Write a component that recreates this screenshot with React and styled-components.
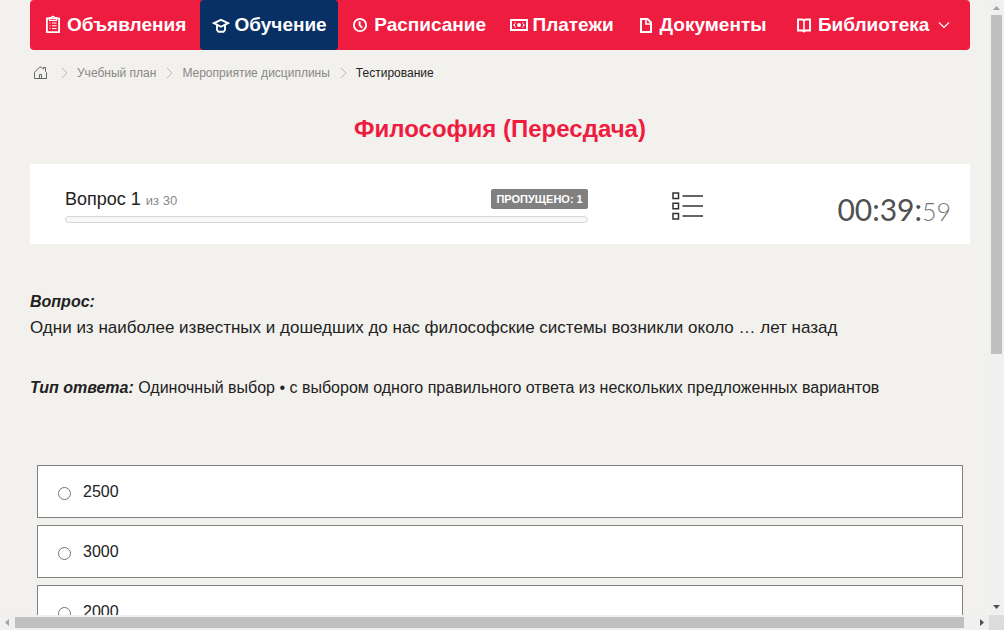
import React, { useState } from 'react';
import styled, { createGlobalStyle } from 'styled-components';

const GlobalStyle = createGlobalStyle`
    * {
        box-sizing: border-box;
    }

    body {
        margin: 0;
        background: #f3f1ed;
        color: #222;
        font-family: "Liberation Sans", Arial, sans-serif;
        font-size: 16px;
    }
`

const Frame = styled.div`
    display: grid;
    grid-template-columns: minmax(0, 1fr) 15px;
    grid-template-rows: minmax(0, 1fr) 15px;
    height: 100vh;
`

const Page = styled.div`
    overflow: hidden;
    padding: 0 19px 0 30px;
`

const Track = styled.div`
    display: flex;
    flex-direction: ${props => props.$vertical ? 'column' : 'row'};
    background: #f0f0f0;
`

const TrackArrow = styled.svg`
    flex: none;
    width: 15px;
    height: 15px;
    fill: ${props => props.$dim ? '#a3a3a3' : '#505050'};
`

const TrackRail = styled.div`
    flex: 1;
    display: flex;
    flex-direction: inherit;
    padding: ${props => props.$vertical ? '0 2px' : '2px 0'};
`

const Thumb = styled.div`
    flex: 0 0 ${props => props.$size};
    background: #c0c0c0;
`

const Corner = styled.div`
    background: #dcdcdc;
`

const Menu = styled.ul`
    display: table;
    width: 100%;
    margin: 0;
    padding: 0;
    list-style: none;
    background: #ee1c3f;
    border-radius: 4px;
`

const MenuItem = styled.li`
    display: table-cell;
    height: 50px;
    vertical-align: middle;
    text-align: center;
    border-radius: 4px;
    background: ${props => props.$active ? '#083065' : 'transparent'};
`

const MenuLink = styled.a`
    display: inline-flex;
    align-items: center;
    gap: 5px;
    color: #fff;
    font-size: 19px;
    font-weight: bold;
    line-height: 24px;
    text-decoration: none;
    white-space: nowrap;
`

const MenuIcon = styled.svg`
    flex: none;
    width: 18px;
    height: 18px;
    margin-bottom: 2px;
    fill: none;
    stroke: #fff;
    stroke-width: 2;
`

const MenuArrow = styled.svg`
    width: 12px;
    height: 8px;
    margin: 0 4px;
    fill: none;
    stroke: #fff;
    stroke-width: 1.2;
`

const Crumbs = styled.nav`
    display: flex;
    align-items: center;
    height: 46px;
    padding-left: 4px;
    font-size: 12px;
    color: #222;
`

const CrumbLink = styled.a`
    display: flex;
    color: #888;
    text-decoration: none;
`

const HomeIcon = styled.svg`
    width: 13px;
    height: 14px;
    margin-right: 4px;
    fill: none;
    stroke: #666;
`

const CrumbArrow = styled.svg`
    width: 7px;
    height: 12px;
    margin: 0 9px 0 10px;
    fill: none;
    stroke: #bbb;
`

const Title = styled.h1`
    margin: 18px 0 20px;
    color: #ee1c3f;
    font-size: 24px;
    line-height: 30px;
    text-align: center;
`

const Panel = styled.section`
    display: grid;
    grid-template-columns: 59% 200px 1fr;
    align-items: center;
    height: 80px;
    padding: 0 19px 0 35px;
    background: #fff;
`

const Status = styled.div`
    display: flex;
    align-items: flex-end;
    justify-content: space-between;
    height: 24px;
    margin-bottom: 7px;
    font-size: 18px;
    line-height: 20px;
`

const Total = styled.small`
    color: #888;
    font-size: 13px;
    line-height: 13px;
`

const Badge = styled.span`
    padding: 0 5px;
    border-radius: 2px;
    background: #808080;
    color: #fff;
    font-size: 11px;
    font-weight: bold;
    line-height: 20px;
`

const Progress = styled.div`
    height: 7px;
    border: 1px solid #d6d6d6;
    border-radius: 4px;
    background: #f7f7f7;
`

const ListButton = styled.button`
    display: flex;
    justify-self: center;
    margin-top: 4px;
    padding: 0;
    border: 0;
    background: none;
    cursor: pointer;
`

const ListIcon = styled.svg`
    width: 31px;
    height: 28px;
    fill: none;
    stroke: #333;
    stroke-width: 1.5;
`

const Timer = styled.div`
    padding-top: 12px;
    color: #505050;
    font-family: Lato, "Open Sans", sans-serif;
    font-size: 30px;
    line-height: 40px;
    text-align: right;
    white-space: nowrap;
`

const Seconds = styled.span`
    color: #777;
    font-size: 25px;
    font-weight: 300;
`

const Question = styled.div`
    margin-top: 45px;
    font-size: 17px;
    line-height: 26px;
`

const Text = styled.p`
    margin: 0;
`

const Label = styled.strong`
    font-size: 16px;
    font-style: italic;
`

const AnswerType = styled.p`
    margin: 34px 0 64px;
    line-height: 26px;
`

const Answers = styled.div`
    display: flex;
    flex-direction: column;
    gap: 7px;
    padding: 0 7px;
`

const Answer = styled.label`
    display: flex;
    align-items: center;
    height: 53px;
    padding-left: 20px;
    border: 1px solid #808080;
    background: #fff;
    cursor: pointer;
`

const Radio = styled.input`
    width: 13px;
    height: 13px;
    margin: 4px 12px 0 0;
`

const menu = [
    {
        title: 'Объявления',
        icon: (
            <>
                <path d="M2.9 3.4h12.2v13.7H2.9z" strokeWidth="1.8" />
                <path d="M5.5 2.5h2a1.6 1.6 0 0 1 3 0h2v3h-7z" strokeWidth="1.2" />
                <path d="M5.5 8h1M8 8h4.5M5.5 10.8h1M8 10.8h4.5M5.5 13.6h1M8 13.6h4.5" strokeWidth="1" />
            </>
        ),
    },
    {
        title: 'Обучение',
        active: true,
        icon: (
            <>
                <path d="M2 8.2 9 4.8l7 3.4-7 3.6z" strokeWidth="1.9" />
                <path d="M5 10v5l1.5 1.8h5L13 15v-5" strokeWidth="1.9" />
            </>
        ),
    },
    {
        title: 'Расписание',
        icon: (
            <>
                <circle cx="9" cy="10" r="6.1" strokeWidth="1.9" />
                <path d="M8.6 6.2v4l2.7 2.7" strokeWidth="1.9" />
            </>
        ),
    },
    {
        title: 'Платежи',
        icon: (
            <>
                <path d="M1 5h16v10H1z" />
                <circle cx="9" cy="10" r="2" fill="#fff" stroke="none" />
                <path d="M3.5 10H5M13 10h1.5" strokeWidth="1.8" />
                <path d="M4.5 8h1.5M12 8h1.5M4.5 12h1.5M12 12h1.5" strokeWidth="1" />
            </>
        ),
    },
    {
        title: 'Документы',
        icon: (
            <>
                <path d="M4 4h6.5L14 7.5V17H4z" />
                <path d="M9 4v5h5" strokeWidth="1.6" />
            </>
        ),
    },
    {
        title: 'Библиотека',
        arrow: true,
        icon: (
            <>
                <path d="M3 4.5h4.5L9 5.5l1.5-1H15v11h-4.5L9 16.5l-1.5-1H3z" strokeWidth="1.9" />
                <path d="M9 5.5V17" strokeWidth="1.6" />
            </>
        ),
    },
];

const answers = ['2500', '3000', '2000'];

function Chevron() {
    return (
        <CrumbArrow viewBox="0 0 7 12" aria-hidden="true">
            <path d="M1 1l5 5-5 5" />
        </CrumbArrow>
    )
}

function Header() {
    return (
        <nav>
            <Menu>
                {menu.map(item => (
                    <MenuItem key={item.title} $active={item.active}>
                        <MenuLink href="#">
                            <MenuIcon viewBox="0 0 18 18" aria-hidden="true">{item.icon}</MenuIcon>
                            {item.title}
                            {item.arrow && (
                                <MenuArrow viewBox="0 0 12 8" aria-hidden="true">
                                    <path d="M1 1.5l5 5 5-5" />
                                </MenuArrow>
                            )}
                        </MenuLink>
                    </MenuItem>
                ))}
            </Menu>
        </nav>
    )
}

function Breadcrumbs() {
    return (
        <Crumbs>
            <CrumbLink href="#" aria-label="Главная">
                <HomeIcon viewBox="0 0 13 14">
                    <path d="M.5 6.2 5.5 1.2h2L9.5 3V1.5h2v4l1 1v6h-12zM5.5 12.5v-4h2v4" />
                </HomeIcon>
            </CrumbLink>
            <Chevron />
            <CrumbLink href="#">Учебный план</CrumbLink>
            <Chevron />
            <CrumbLink href="#">Мероприятие дисциплины</CrumbLink>
            <Chevron />
            <span>Тестирование</span>
        </Crumbs>
    )
}

function QuestionPanel() {
    return (
        <Panel>
            <div>
                <Status>
                    <span>Вопрос 1 <Total>из 30</Total></span>
                    <Badge>ПРОПУЩЕНО: 1</Badge>
                </Status>
                <Progress role="progressbar" aria-valuenow={0} aria-valuemax={30} />
            </div>
            <ListButton type="button" aria-label="Список вопросов">
                <ListIcon viewBox="0 0 31 28">
                    <path d="M1 1h5.5v5.5H1zM1 11.2h5.5v5.5H1zM1 21.5h5.5V27H1z" />
                    <path d="M10.5 4H31M10.5 14H31M10.5 24H31" />
                </ListIcon>
            </ListButton>
            <Timer>00:39:<Seconds>59</Seconds></Timer>
        </Panel>
    )
}

function App() {
    const [answer, setAnswer] = useState('');

    return (
        <Frame>
            <GlobalStyle />
            <Page>
                <Header />
                <Breadcrumbs />
                <Title>Философия (Пересдача)</Title>
                <QuestionPanel />
                <Question>
                    <Label>Вопрос:</Label>
                    <Text>Одни из наиболее известных и дошедших до нас философские системы возникли около … лет назад</Text>
                </Question>
                <AnswerType>
                    <Label>Тип ответа:</Label> Одиночный выбор • с выбором одного правильного ответа из нескольких предложенных вариантов
                </AnswerType>
                <Answers>
                    {answers.map(value => (
                        <Answer key={value}>
                            <Radio
                                type="radio"
                                name="answer"
                                value={value}
                                checked={answer === value}
                                onChange={() => setAnswer(value)}
                            />
                            {value}
                        </Answer>
                    ))}
                </Answers>
            </Page>
            <Track $vertical>
                <TrackArrow $dim viewBox="0 0 15 15"><path d="M4 10h7L7.5 6z" /></TrackArrow>
                <TrackRail $vertical><Thumb $size="58%" /></TrackRail>
                <TrackArrow viewBox="0 0 15 15"><path d="M4 5h7L7.5 9z" /></TrackArrow>
            </Track>
            <Track>
                <TrackArrow $dim viewBox="0 0 15 15"><path d="M9 4v7L5 7.5z" /></TrackArrow>
                <TrackRail><Thumb $size="99%" /></TrackRail>
                <TrackArrow viewBox="0 0 15 15"><path d="M6 4v7l4-3.5z" /></TrackArrow>
            </Track>
            <Corner />
        </Frame>
    )
}

export default App;
